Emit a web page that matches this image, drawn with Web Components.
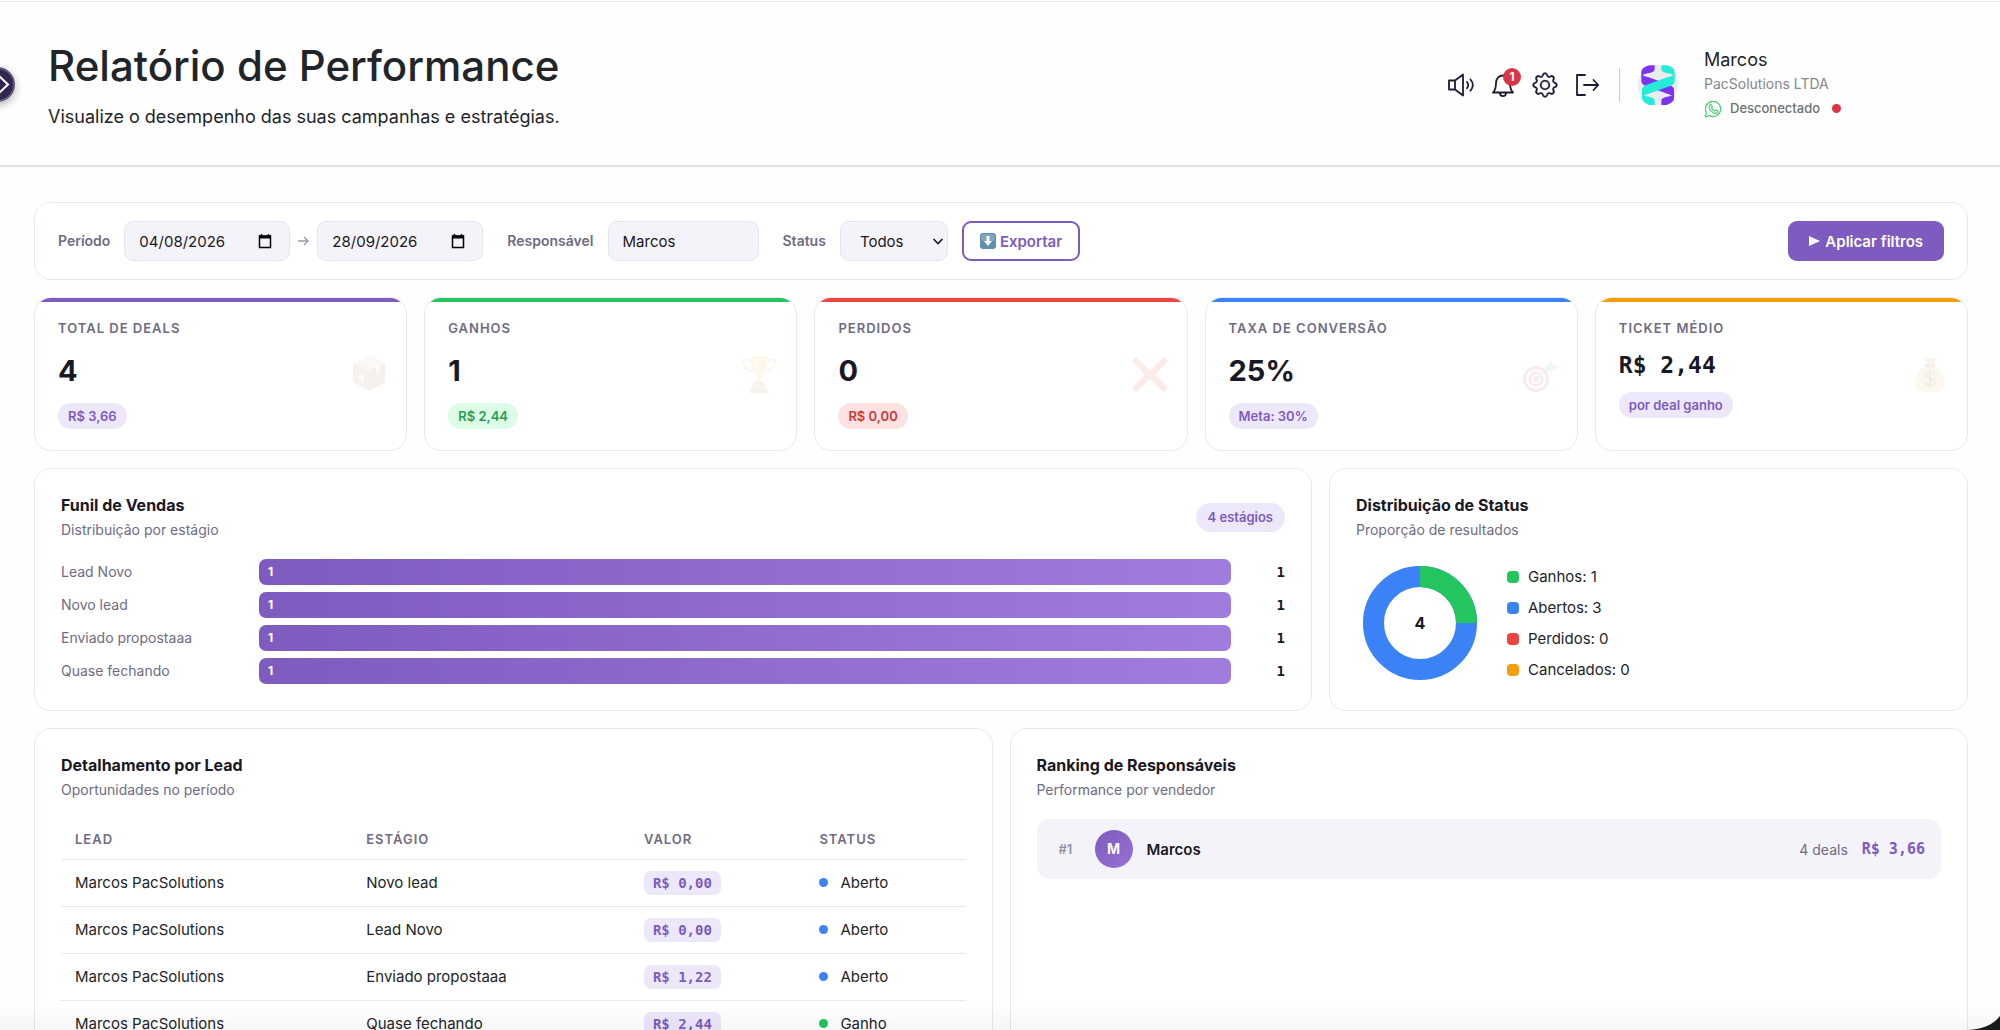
<!DOCTYPE html>
<html lang="pt-BR">
<head>
<meta charset="UTF-8">
<meta name="viewport" content="width=device-width, initial-scale=1">
<title>Relatório de Performance</title>
<style>
  :root {
    --ink: #1a1825;
    --body: #212529;
    --muted: #6f6b84;
    --line: #e9e8f1;
    --soft: #f4f3f9;
    --purple: #7e5bbe;
    --lilac: #ece8fa;
    --green: #22c55e;
    --red: #ef4444;
    --blue: #3b82f6;
    --amber: #f59e0b;
    --mono: "DejaVu Sans Mono", monospace;
  }
  body {
    margin: 0;
    background: #fefefe;
    color: var(--body);
    font-family: Inter, "Liberation Sans", sans-serif;
  }
</style>
</head>
<body>
<report-page></report-page>

<script>
const reset = `
  * { box-sizing: border-box; margin: 0; }
  button, input, select { font-family: inherit; }
`;

class ReportElement extends HTMLElement {
  constructor() {
    super();
    this.attachShadow({ mode: "open" });
  }
  connectedCallback() {
    this.shadowRoot.innerHTML = `<style>${reset}${this.styles()}</style>${this.render()}`;
  }
  attr(name) {
    return this.getAttribute(name) || "";
  }
}

class AppHeader extends ReportElement {
  styles() {
    return `
    :host {
      display: flex;
      align-items: center;
      justify-content: space-between;
      min-height: 166px;
      padding: 2px 36px 0 48px;
      border-top: 1px solid #e4e5e6;
      border-bottom: 2px solid #e0e1e3;
    }
    h1 { font-size: 42px; line-height: 56px; font-weight: 500; }
    .intro p { margin-top: 9px; font-size: 18px; line-height: 28px; }
    .tools { display: flex; align-items: center; }
    nav { display: flex; gap: 14px; padding-right: 18px; border-right: 1px solid #c9cacd; height: 34px; align-items: center; }
    nav button {
      position: relative;
      display: block;
      width: 28px;
      height: 28px;
      padding: 0;
      border: 0;
      background: none;
      color: #1f1b33;
    }
    nav svg { display: block; width: 28px; height: 28px; }
    .badge {
      position: absolute;
      top: -3px;
      right: -4px;
      width: 18px;
      border-radius: 9px;
      background: #dc3545;
      color: #fff;
      font-size: 12px;
      line-height: 18px;
      font-weight: 700;
      text-align: center;
    }
    .logo { display: block; width: 40px; height: 40px; margin: 0 26px 0 18px; }
    .user { width: 260px; }
    .name { font-size: 18px; line-height: 24px; }
    .company { font-size: 14px; line-height: 24px; color: #85878a; }
    .state { display: flex; align-items: center; font-size: 13px; line-height: 25px; font-weight: 500; color: #6c7278; }
    .state svg { width: 18px; height: 18px; margin-right: 8px; }
    .state i { width: 9px; height: 9px; margin-left: 12px; border-radius: 50%; background: #dc3545; }
    .toggle {
      position: absolute;
      top: 67px;
      left: -20px;
      width: 35px;
      height: 35px;
      padding: 0;
      border: 2px solid #5e5775;
      border-radius: 50%;
      background: #30264f;
      box-shadow: 0 3px 8px rgba(0, 0, 0, .3);
    }
    .toggle svg { display: block; width: 31px; height: 31px; }
    `;
  }
  render() {
    return `
    <button class="toggle" aria-label="Abrir menu">
      <svg viewBox="0 0 31 31" fill="none" stroke="#fff" stroke-width="2"><path d="M17 7l9 8.500-9 8.500"/></svg>
    </button>
    <div class="intro">
      <h1>Relatório de Performance</h1>
      <p>Visualize o desempenho das suas campanhas e estratégias.</p>
    </div>
    <div class="tools">
      <nav>
        <button aria-label="Som">
          <svg viewBox="0 0 28 28" fill="none" stroke="currentColor" stroke-width="1.800" stroke-linejoin="round" stroke-linecap="round">
            <path d="M2 9.500h6v9H2zM8 9.500l8-6v21l-8-6"/><path d="M20 11c1.600 2 1.600 4.200 0 6.200M23.500 8.500c3 3.600 3 7.600 0 11.200"/>
          </svg>
        </button>
        <button aria-label="Notificações">
          <svg viewBox="0 0 28 28" fill="none" stroke="currentColor" stroke-width="1.800" stroke-linejoin="round">
            <path d="M4 21.500c2.200-2 3-4 3-9.500 0-4.500 3-7.500 7-7.500s7 3 7 7.500c0 5.500.800 7.500 3 9.500zM11 22c0 2 1.200 3.200 3 3.200s3-1.200 3-3.200"/>
          </svg>
          <span class="badge">1</span>
        </button>
        <button aria-label="Configurações">
          <svg viewBox="-1 -1 18 18" fill="currentColor" stroke="currentColor" stroke-width=".200">
            <path d="M8 4.754a3.246 3.246 0 1 0 0 6.492 3.246 3.246 0 0 0 0-6.492zM5.754 8a2.246 2.246 0 1 1 4.492 0 2.246 2.246 0 0 1-4.492 0z"/>
            <path d="M9.796 1.343c-.527-1.790-3.065-1.790-3.592 0l-.094.319a.873.873 0 0 1-1.255.520l-.292-.160c-1.640-.892-3.433.902-2.540 2.541l.159.292a.873.873 0 0 1-.520 1.255l-.319.094c-1.790.527-1.790 3.065 0 3.592l.319.094a.873.873 0 0 1 .520 1.255l-.160.292c-.892 1.640.901 3.434 2.541 2.540l.292-.159a.873.873 0 0 1 1.255.520l.094.319c.527 1.790 3.065 1.790 3.592 0l.094-.319a.873.873 0 0 1 1.255-.520l.292.160c1.640.893 3.434-.902 2.540-2.541l-.159-.292a.873.873 0 0 1 .520-1.255l.319-.094c1.790-.527 1.790-3.065 0-3.592l-.319-.094a.873.873 0 0 1-.520-1.255l.160-.292c.893-1.640-.902-3.433-2.541-2.540l-.292.159a.873.873 0 0 1-1.255-.520l-.094-.319zm-2.633.283c.246-.835 1.428-.835 1.674 0l.094.319a1.873 1.873 0 0 0 2.693 1.115l.291-.160c.764-.415 1.600.420 1.184 1.185l-.159.292a1.873 1.873 0 0 0 1.116 2.692l.318.094c.835.246.835 1.428 0 1.674l-.319.094a1.873 1.873 0 0 0-1.115 2.693l.160.291c.415.764-.420 1.600-1.185 1.184l-.291-.159a1.873 1.873 0 0 0-2.693 1.116l-.094.318c-.246.835-1.428.835-1.674 0l-.094-.319a1.873 1.873 0 0 0-2.692-1.115l-.292.160c-.764.415-1.600-.420-1.184-1.185l.159-.291A1.873 1.873 0 0 0 1.945 8.930l-.319-.094c-.835-.246-.835-1.428 0-1.674l.319-.094A1.873 1.873 0 0 0 3.060 4.377l-.160-.292c-.415-.764.420-1.600 1.185-1.184l.292.159a1.873 1.873 0 0 0 2.692-1.115l.094-.319z"/>
          </svg>
        </button>
        <button aria-label="Sair">
          <svg viewBox="0 0 28 28" fill="none" stroke="currentColor" stroke-width="1.800" stroke-linejoin="round" stroke-linecap="round">
            <path d="M12 4H4v20h8M11 14h14M20.500 9l4.800 5-4.800 5"/>
          </svg>
        </button>
      </nav>
      <svg class="logo" viewBox="0 0 120 120" aria-label="PacSolutions">
        <circle cx="60" cy="60" r="60" fill="#ececee"/>
        <g fill="#7b35f2" transform="matrix(-1 0 0 1 120 0)">
          <path d="M70 1h16q24 6 24 20v14q-2-6-14-9C80 23 70 20 70 12z"/>
          <path d="M110 26v24q-2 8-14 13L32 86q-18 6-20 12V72q2-8 14-13l64-23q18-4 20-10z"/>
          <path d="M12 85q2 6 14 9c16 3 24 6 24 14v12H34Q12 112 12 100z"/>
        </g>
        <g fill="#25ecd9">
          <path d="M70 1h16q24 6 24 20v14q-2-6-14-9C80 23 70 20 70 12z"/>
          <path d="M110 26v24q-2 8-14 13L32 86q-18 6-20 12V72q2-8 14-13l64-23q18-4 20-10z"/>
          <path d="M12 85q2 6 14 9c16 3 24 6 24 14v12H34Q12 112 12 100z"/>
        </g>
      </svg>
      <div class="user">
        <p class="name">Marcos</p>
        <p class="company">PacSolutions LTDA</p>
        <p class="state">
          <svg viewBox="0 0 18 18" fill="none" stroke="#45cf72" stroke-width="1.200" stroke-linejoin="round">
            <path d="M1.200 16.800l1.200-4.200a7.600 7.600 0 1 1 3 3z"/>
            <path d="M5.800 5.200c.800-1 1.500-.800 1.800 0l.600 1.400c.200.500-.800 1.100-.600 1.500.700 1.300 1.500 2.100 2.800 2.700.500.200 1-.900 1.400-.700l1.500.800c.700.400.300 1.300-.300 1.800-1 .800-2.300.600-3.600 0-1.800-.900-3.200-2.300-4-4-.500-1.300-.400-2.600.400-3.500z"/>
          </svg>
          Desconectado<i></i>
        </p>
      </div>
    </div>`;
  }
}

class FilterBar extends ReportElement {
  styles() {
    return `
    :host {
      display: block;
      padding: 18px 23px;
      border: 1px solid var(--line);
      border-radius: 17px;
      background: #fff;
    }
    form, .group, .dates, .field { display: flex; align-items: center; }
    form { gap: 24px; }
    .group { gap: 14px; }
    .dates { gap: 8px; }
    label { font-size: 14px; line-height: 20px; font-weight: 600; color: var(--muted); }
    .field, .text, select {
      height: 40px;
      border: 1px solid #e6e5ef;
      border-radius: 9px;
      background: var(--soft);
      color: var(--ink);
      font-size: 15px;
    }
    .field { width: 166px; padding: 0 17px 0 14px; }
    .field input { flex: 1; min-width: 0; padding: 0; border: 0; background: none; color: inherit; font-size: 15px; }
    .field svg { width: 14px; height: 16px; }
    .dates > svg { width: 11px; height: 12px; }
    .text { width: 151px; padding: 0 14px; }
    .pick { position: relative; display: flex; }
    select { width: 108px; padding: 0 19px; appearance: none; }
    .pick svg { position: absolute; right: 4px; top: 16px; width: 12px; height: 9px; pointer-events: none; }
    button {
      display: flex;
      align-items: center;
      height: 40px;
      border-radius: 9px;
      font-size: 15px;
      font-weight: 600;
    }
    .export { gap: 4px; padding: 0 16px; border: 2px solid var(--purple); background: #fff; color: var(--purple); }
    .export svg { width: 16px; height: 16px; }
    .apply { gap: 5px; margin-left: auto; padding: 0 21px; border: 0; background: var(--purple); color: #fff; }
    .apply svg { width: 11px; height: 12px; }
    `;
  }
  render() {
    const calendar = `<svg viewBox="0 0 14 16" fill="none" stroke="#000" stroke-width="1.500"><path d="M1.500 3h11v11.500h-11z"/><path d="M1 4h12" stroke-width="3"/><path d="M3.500 1v3M10.500 1v3"/></svg>`;
    return `
    <form>
      <div class="group">
        <label for="from">Período</label>
        <div class="dates">
          <span class="field"><input id="from" value="04/08/2026">${calendar}</span>
          <svg viewBox="0 0 11 12" fill="none" stroke="#9a97ad" stroke-width="1.400"><path d="M0 6h10M6 2l4 4-4 4"/></svg>
          <span class="field"><input id="to" aria-label="Até" value="28/09/2026">${calendar}</span>
        </div>
      </div>
      <div class="group">
        <label for="owner">Responsável</label>
        <input class="text" id="owner" value="Marcos">
      </div>
      <div class="group">
        <label for="status">Status</label>
        <span class="pick">
          <select id="status"><option>Todos</option></select>
          <svg viewBox="0 0 12 9" fill="none" stroke="#1a1825" stroke-width="1.600"><path d="M1.500 2L6 6.500 10.500 2"/></svg>
        </span>
        <button class="export" type="button">
          <svg viewBox="0 0 16 16"><rect width="16" height="16" rx="3" fill="#5f8fae"/><rect x="1" y="1" width="14" height="7" rx="2" fill="#7ea5be"/><path d="M6.500 3h3v5H12l-4 5-4-5h2.500z" fill="#fff"/></svg>
          Exportar
        </button>
      </div>
      <button class="apply" type="button">
        <svg viewBox="0 0 11 12"><path d="M0 1l11 5-11 5z" fill="#fff"/></svg>
        Aplicar filtros
      </button>
    </form>`;
  }
}

const kpiIcons = {
  box: `<path d="M21 3L5 10v19l16 9 16-9V10z" fill="#b98a5c"/><path d="M21 3L5 10l16 8 16-8z" fill="#dcb98d"/><path d="M21 18v20l16-9V10z" fill="#a3774b"/><path d="M12 7l16 7.500v6l4-2v-6L16 5z" fill="#efdcc0"/><path d="M16 24l-5-3v4l5 3z" fill="#fff"/>`,
  trophy: `<path d="M12 3h18c0 11-3 18-7 20v6h-4v-6c-4-2-7-9-7-20z" fill="#f0c04a"/><path d="M12 7H5c0 7 4 11 9 11M30 7h7c0 7-4 11-9 11" fill="none" stroke="#e8b23c" stroke-width="2"/><path d="M14 31h14v6H14z" fill="#c89a4e"/><path d="M12 37h18v3H12zM16 29h10v2H16z" fill="#b7803a"/><path d="M16 6h3c0 7 1 11 2 14-3-3-5-8-5-14z" fill="#fae5a0"/>`,
  cross: `<path d="M7 4L21 17.500 35 4l4 4.500L26 21.500 39 35l-4 4.500L21 26 7 39.500 3 35l13-13.500L3 8.500z" fill="#f0463c"/>`,
  target: `<circle cx="17" cy="26" r="13" fill="#d8404a"/><circle cx="17" cy="26" r="10" fill="#fff"/><circle cx="17" cy="26" r="7.500" fill="#d8404a"/><circle cx="17" cy="26" r="5" fill="#fff"/><circle cx="17" cy="26" r="3" fill="#d8404a"/><path d="M17 26l15-13" stroke="#5b9b9a" stroke-width="2"/><path d="M26 16l1-4 6-4v4l7 1-5 5-6 1z" fill="#6cc3b7"/>`,
  bag: `<path d="M14 4q7 3 14 0l-4 8h-6z" fill="#dfb25a"/><path d="M17 12h8c8 5 11 12 10 21q-1 6-7 6H14q-6 0-7-6c-1-9 2-16 10-21z" fill="#e9c65d"/><path d="M16 11h10v3H16z" fill="#c4483e"/><path d="M26 20.500c-2-2-9-2-9 1.500 0 4.500 9 2.500 9 7 0 4-7.500 4-10 1M21 16.500v19" fill="none" stroke="#7b5b2a" stroke-width="2"/>`
};

class KpiCard extends ReportElement {
  styles() {
    return `
    :host {
      position: relative;
      display: flex;
      justify-content: space-between;
      align-items: center;
      padding: 21px 16px 21px 23px;
      border: 1px solid var(--line);
      border-radius: 17px;
      background: #fff;
      overflow: hidden;
    }
    :host::before {
      content: "";
      position: absolute;
      inset: 0 0 auto;
      height: 4px;
      background: var(--accent);
    }
    .data { align-self: flex-start; }
    h2 { font-size: 13px; line-height: 18px; font-weight: 600; letter-spacing: 1px; text-transform: uppercase; color: var(--muted); }
    .value { margin: 16px 0 14px; font-size: 29px; line-height: 36px; font-weight: 700; color: var(--ink); }
    :host([mono]) .value { font-family: var(--mono); font-size: 23px; line-height: 25px; }
    .pill {
      display: inline-block;
      padding: 0 10px;
      border-radius: 13px;
      background: var(--lilac);
      color: var(--purple);
      font-size: 13px;
      line-height: 26px;
      font-weight: 600;
      vertical-align: top;
    }
    :host([tone="green"]) .pill { background: #dcfce7; color: #2a9d54; }
    :host([tone="red"]) .pill { background: #fee2e2; color: #d0353a; }
    svg { width: 42px; height: 42px; opacity: .1; }
    `;
  }
  render() {
    return `
    <div class="data">
      <h2>${this.attr("label")}</h2>
      <p class="value">${this.attr("value")}</p>
      <span class="pill"><slot></slot></span>
    </div>
    <svg viewBox="0 0 42 42" aria-hidden="true">${kpiIcons[this.attr("icon")]}</svg>`;
  }
}

class PanelCard extends ReportElement {
  styles() {
    return `
    :host {
      display: flex;
      flex-direction: column;
      padding: 26px;
      border: 1px solid var(--line);
      border-radius: 17px;
      background: #fff;
    }
    header { display: flex; align-items: center; justify-content: space-between; margin-bottom: 19px; }
    h2 { font-size: 16px; line-height: 20px; font-weight: 700; color: var(--ink); }
    p { margin-top: 5px; font-size: 14px; line-height: 20px; color: var(--muted); }
    .tag { padding: 0 12px; border-radius: 15px; background: var(--lilac); color: var(--purple); font-size: 13px; line-height: 29px; font-weight: 600; }
    `;
  }
  render() {
    const tag = this.attr("tag");
    return `
    <header>
      <div><h2>${this.attr("heading")}</h2><p>${this.attr("note")}</p></div>
      ${tag ? `<span class="tag">${tag}</span>` : ""}
    </header>
    <slot></slot>`;
  }
}

class FunnelChart extends ReportElement {
  styles() {
    return `
    :host { display: grid; gap: 7px; }
    .row { display: flex; align-items: center; gap: 16px; }
    .label { width: 182px; font-size: 14px; line-height: 26px; color: var(--muted); }
    .bar {
      flex: 1;
      padding-left: 9px;
      border-radius: 7px;
      background: linear-gradient(90deg, #7e5bbe, #a17cdf);
      color: #fff;
      font-size: 12px;
      line-height: 26px;
      font-weight: 700;
    }
    .count { width: 38px; font-family: var(--mono); font-size: 14px; line-height: 26px; font-weight: 700; text-align: right; color: var(--ink); }
    `;
  }
  render() {
    const stages = ["Lead Novo", "Novo lead", "Enviado propostaaa", "Quase fechando"];
    return stages.map(stage => `
    <div class="row">
      <span class="label">${stage}</span>
      <span class="bar">1</span>
      <span class="count">1</span>
    </div>`).join("");
  }
}

class StatusDonut extends ReportElement {
  styles() {
    return `
    :host { display: flex; align-items: flex-end; gap: 30px; padding: 7px 0 0 7px; }
    svg { width: 114px; height: 114px; }
    text { font-size: 16px; font-weight: 700; fill: var(--ink); }
    ul { display: grid; gap: 11px; padding: 0; list-style: none; }
    li { display: flex; align-items: center; gap: 9px; font-size: 15px; line-height: 20px; }
    i { width: 12px; height: 12px; border-radius: 4px; background: var(--dot); }
    `;
  }
  render() {
    return `
    <svg viewBox="0 0 114 114" role="img" aria-label="Ganhos 1, Abertos 3">
      <circle cx="57" cy="57" r="46.500" fill="none" stroke="#3b82f6" stroke-width="21"/>
      <path d="M57 10.500A46.500 46.500 0 0 1 103.500 57" fill="none" stroke="#22c55e" stroke-width="21"/>
      <text x="57" y="63" text-anchor="middle">4</text>
    </svg>
    <ul>
      <li><i style="--dot: var(--green)"></i>Ganhos: 1</li>
      <li><i style="--dot: var(--blue)"></i>Abertos: 3</li>
      <li><i style="--dot: var(--red)"></i>Perdidos: 0</li>
      <li><i style="--dot: var(--amber)"></i>Cancelados: 0</li>
    </ul>`;
  }
}

class LeadTable extends ReportElement {
  styles() {
    return `
    :host { display: block; }
    table { width: 100%; border-collapse: collapse; table-layout: fixed; }
    th, td { padding: 0 14px; border-bottom: 1px solid var(--line); text-align: left; }
    th { height: 40px; font-size: 13px; font-weight: 600; letter-spacing: 1px; text-transform: uppercase; color: var(--muted); }
    td { height: 47px; font-size: 15px; line-height: 22px; }
    th:nth-child(1) { width: 32.2%; }
    th:nth-child(2) { width: 30.7%; }
    th:nth-child(3) { width: 19.4%; }
    .money {
      display: inline-block;
      padding: 0 9px;
      border-radius: 7px;
      background: var(--lilac);
      color: var(--purple);
      font-family: var(--mono);
      font-size: 14px;
      line-height: 24px;
      font-weight: 700;
      vertical-align: middle;
    }
    .state { display: flex; align-items: center; gap: 12px; }
    .state::before { content: ""; width: 9px; height: 9px; border-radius: 50%; background: var(--blue); }
    .state.won::before { background: var(--green); }
    `;
  }
  render() {
    const rows = [
      ["Novo lead", "R$ 0,00", "Aberto"],
      ["Lead Novo", "R$ 0,00", "Aberto"],
      ["Enviado propostaaa", "R$ 1,22", "Aberto"],
      ["Quase fechando", "R$ 2,44", "Ganho"]
    ];
    return `
    <table>
      <thead><tr><th>Lead</th><th>Estágio</th><th>Valor</th><th>Status</th></tr></thead>
      <tbody>
        ${rows.map(([stage, value, state]) => `
        <tr>
          <td>Marcos PacSolutions</td>
          <td>${stage}</td>
          <td><span class="money">${value}</span></td>
          <td><span class="state ${state === "Ganho" ? "won" : ""}">${state}</span></td>
        </tr>`).join("")}
      </tbody>
    </table>`;
  }
}

class RankRow extends ReportElement {
  styles() {
    return `
    :host {
      display: flex;
      align-items: center;
      gap: 14px;
      min-height: 60px;
      padding: 0 16px 0 22px;
      border-radius: 13px;
      background: var(--soft);
    }
    .place { width: 22px; font-size: 13px; font-weight: 600; color: #9490a8; }
    .avatar {
      width: 38px;
      border-radius: 50%;
      background: linear-gradient(135deg, #7e5bbe, #9772d4);
      color: #fff;
      font-size: 14px;
      line-height: 38px;
      font-weight: 700;
      text-align: center;
    }
    .name { flex: 1; font-size: 15px; font-weight: 600; color: var(--ink); }
    .deals { font-size: 14px; color: var(--muted); }
    .total { font-family: var(--mono); font-size: 15px; font-weight: 700; color: var(--purple); }
    `;
  }
  render() {
    const name = this.attr("name");
    return `
    <span class="place">#${this.attr("place")}</span>
    <span class="avatar">${name[0]}</span>
    <span class="name">${name}</span>
    <span class="deals">${this.attr("deals")} deals</span>
    <span class="total">${this.attr("total")}</span>`;
  }
}

class ReportPage extends ReportElement {
  styles() {
    return `
    :host { display: block; position: relative; padding-top: 1px; overflow: hidden; }
    main { display: grid; gap: 17px; padding: 35px 32px 32px 34px; }
    .kpis { display: grid; grid-template-columns: repeat(5, 1fr); gap: 17px; }
    .charts { display: grid; grid-template-columns: 2fr 1fr; gap: 17px; }
    .details { display: grid; grid-template-columns: 1fr 1fr; gap: 17px; }
    .corner { position: fixed; right: 0; bottom: 0; width: 32px; height: 14px; }
    .fade { position: fixed; inset: auto 0 0; height: 28px; background: linear-gradient(transparent, rgba(0, 0, 0, .03)); pointer-events: none; }
    `;
  }
  render() {
    return `
    <app-header></app-header>
    <main>
      <filter-bar></filter-bar>
      <section class="kpis">
        <kpi-card label="Total de deals" value="4" icon="box" style="--accent: var(--purple)">R$ 3,66</kpi-card>
        <kpi-card label="Ganhos" value="1" icon="trophy" tone="green" style="--accent: var(--green)">R$ 2,44</kpi-card>
        <kpi-card label="Perdidos" value="0" icon="cross" tone="red" style="--accent: var(--red)">R$ 0,00</kpi-card>
        <kpi-card label="Taxa de conversão" value="25%" icon="target" style="--accent: var(--blue)">Meta: 30%</kpi-card>
        <kpi-card label="Ticket médio" value="R$ 2,44" icon="bag" mono style="--accent: var(--amber)">por deal ganho</kpi-card>
      </section>
      <section class="charts">
        <panel-card heading="Funil de Vendas" note="Distribuição por estágio" tag="4 estágios"><funnel-chart></funnel-chart></panel-card>
        <panel-card heading="Distribuição de Status" note="Proporção de resultados"><status-donut></status-donut></panel-card>
      </section>
      <section class="details">
        <panel-card heading="Detalhamento por Lead" note="Oportunidades no período"><lead-table></lead-table></panel-card>
        <panel-card heading="Ranking de Responsáveis" note="Performance por vendedor"><rank-row place="1" name="Marcos" deals="4" total="R$ 3,66"></rank-row></panel-card>
      </section>
    </main>
    <div class="fade"></div>
    <svg class="corner" viewBox="0 0 32 14" aria-hidden="true"><path d="M0 14Q22 13 32 0v14z" fill="#161c1b"/></svg>`;
  }
}

customElements.define("app-header", AppHeader);
customElements.define("filter-bar", FilterBar);
customElements.define("kpi-card", KpiCard);
customElements.define("panel-card", PanelCard);
customElements.define("funnel-chart", FunnelChart);
customElements.define("status-donut", StatusDonut);
customElements.define("lead-table", LeadTable);
customElements.define("rank-row", RankRow);
customElements.define("report-page", ReportPage);
</script>
</body>
</html>
